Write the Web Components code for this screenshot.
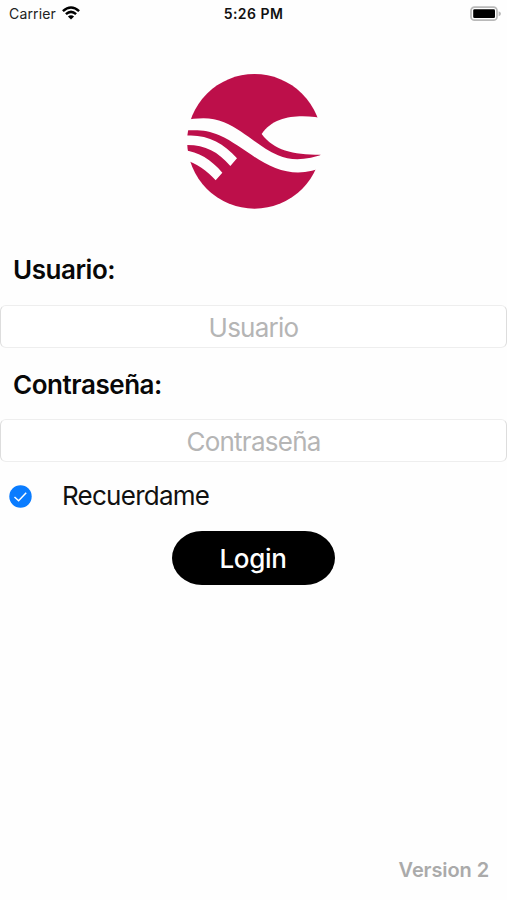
<!DOCTYPE html>
<html lang="es"><head><meta charset="utf-8"><title>Login</title>
<style>html,body{margin:0;height:100%;background:#fefefe}</style></head>
<body>
<login-screen></login-screen>
<script>
const define = (name, markup) => customElements.define(name, class extends HTMLElement {
  constructor() {
    super();
    this.attachShadow({mode: 'open'}).innerHTML = markup;
  }
  connectedCallback() {
    const input = this.shadowRoot.querySelector('input');
    if (input) input.placeholder = this.getAttribute('placeholder') || '';
  }
});

define('status-bar', `<style>
:host{display:grid;grid-template-columns:1fr auto 1fr;align-items:center;height:27px;padding:0 6px 0 9px;font-size:14px;color:#222}
.left{display:flex;align-items:center;gap:6px;letter-spacing:.15px}
.left span,.time{padding-top:1px}
.time{font-weight:600;letter-spacing:.45px;color:#111;margin-right:3px}
.right{display:flex;justify-content:flex-end}
svg{display:block}
</style>
<div class="left"><span>Carrier</span><svg width="18" height="14" viewBox="0 0 18 14" fill="none" stroke="#000" stroke-width="2.5"><path d="M.9 5.1Q9-2.2 17.1 5.1M3.9 8.1Q9 3.6 14.1 8.1"/><path d="M9 13.6L5.900 10.600Q9 7.900 12.100 10.600Z" fill="#000" stroke="none"/></svg></div>
<span class="time">5:26 PM</span>
<div class="right"><svg width="31" height="16" viewBox="0 0 31 16"><rect x="1" y="1.200" width="26" height="13" rx="3.500" fill="#fff" stroke="#b9b9b9" stroke-width="1.700"/><rect x="3.200" y="3.200" width="21.800" height="8.900" rx="1.300"/><path d="M28.600 5.300Q31 6 31 7.800T28.600 10.200Z" fill="#b9b9b9"/></svg></div>`);

define('brand-logo', `<style>:host{display:block;width:150px;height:150px}svg{display:block}</style>
<svg width="150" height="150" viewBox="0 0 450 450">
<circle cx="223.500" cy="229" r="202" fill="#bd0f4a"/>
<g fill="#fefefe">
<path d="M10 166C55 158 95 155 132 172C195 199 236 246 294 271C335 288 378 287 440 264V303C385 326 338 329 286 309C224 285 177 237 118 211C83 195 52 194 10 197Z"/>
<path d="M440 162C378 149 287 144 245 207C284 259 345 271 440 269Z"/>
<path d="M10 213C75 205 128 232 171 280L151 303C111 257 72 237 10 240Z"/>
<path d="M10 256C55 259 94 285 127 323L107 346C80 316 52 297 10 283Z"/>
</g></svg>`);

define('field-label', `<style>:host{display:flex;align-items:center;height:40px;padding-left:13px;font-size:26px;font-weight:600;letter-spacing:-.45px;color:#080808}</style><slot></slot>`);

define('text-field', `<style>:host{display:block;height:43px}
input{box-sizing:border-box;display:block;width:100%;height:100%;margin:0;padding:1px 0 0;border:1.500px solid #eee;border-left-color:#ddd;border-right-color:#ddd;border-radius:6px;background:#fff;font:inherit;font-size:26px;letter-spacing:-.75px;text-align:center;outline:0}
input::placeholder{color:#b5b5b5;opacity:1}</style><input>`);

define('check-option', `<style>:host{display:flex;align-items:center;gap:30px;height:40px;padding-left:9px;font-size:26px;letter-spacing:-.75px;color:#111}
svg{display:block}</style>
<svg width="23" height="23" viewBox="0 0 23 23"><circle cx="11.500" cy="11.500" r="11.200" fill="#0a7cff"/><path d="M5.500 12L9.600 15.700L17.200 7.800" fill="none" stroke="#fff" stroke-width="1.500"/></svg><span><slot></slot></span>`);

define('pill-button', `<style>:host{display:block;width:163px;height:54px}
button{display:block;width:100%;height:100%;padding:1px 1px 0 0;border:0;border-radius:30px/27px;background:#000;color:#fff;font:inherit;font-size:26px;font-weight:500;letter-spacing:-.3px}</style><button><slot></slot></button>`);

define('login-screen', `<style>
:host{display:flex;flex-direction:column;box-sizing:border-box;width:100%;height:900px;overflow:hidden;background:#fefefe;font-family:Inter,"Liberation Sans",sans-serif;line-height:1.2}
brand-logo{margin:38px 0 0 180px}
.user{margin:35px 0 15px}
.pass{margin:17px 0 14px}
check-option{margin:14px 0 15px}
pill-button{margin-left:172px}
footer{margin:auto 18px 17px auto;font-size:20px;line-height:26px;font-weight:600;letter-spacing:-.1px;color:#aaa}
</style>
<status-bar></status-bar>
<brand-logo></brand-logo>
<field-label class="user">Usuario:</field-label>
<text-field placeholder="Usuario"></text-field>
<field-label class="pass">Contraseña:</field-label>
<text-field placeholder="Contraseña"></text-field>
<check-option>Recuerdame</check-option>
<pill-button>Login</pill-button>
<footer>Version 2</footer>`);
</script>
</body></html>
